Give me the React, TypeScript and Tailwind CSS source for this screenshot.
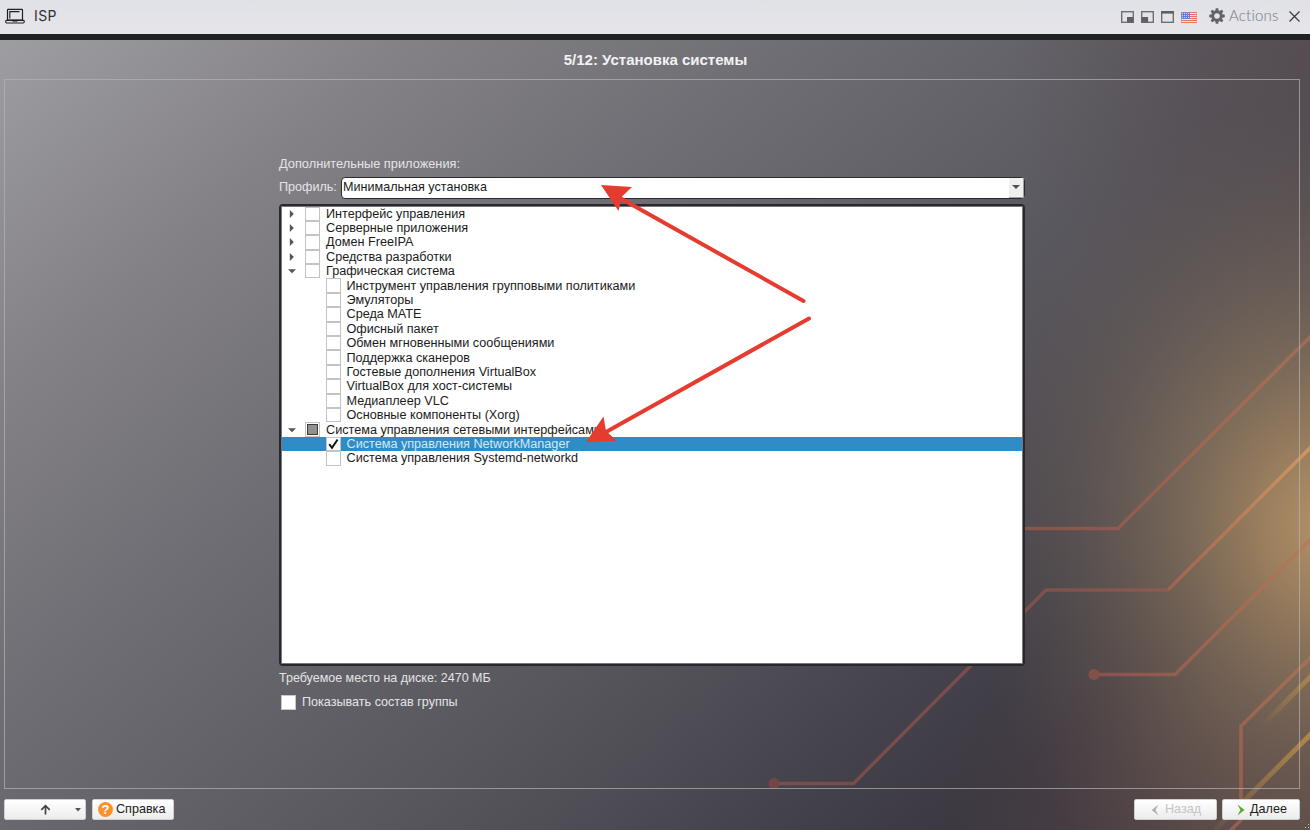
import React from "react";

type Row = {
  label: string;
  child?: boolean;
  open?: boolean;
  state?: "off" | "partial" | "on";
};

const rows: Row[] = [
  { label: "Интерфейс управления" },
  { label: "Серверные приложения" },
  { label: "Домен FreeIPA" },
  { label: "Средства разработки" },
  { label: "Графическая система", open: true },
  { label: "Инструмент управления групповыми политиками", child: true },
  { label: "Эмуляторы", child: true },
  { label: "Среда MATE", child: true },
  { label: "Офисный пакет", child: true },
  { label: "Обмен мгновенными сообщениями", child: true },
  { label: "Поддержка сканеров", child: true },
  { label: "Гостевые дополнения VirtualBox", child: true },
  { label: "VirtualBox для хост-системы", child: true },
  { label: "Медиаплеер VLC", child: true },
  { label: "Основные компоненты (Xorg)", child: true },
  { label: "Система управления сетевыми интерфейсами", open: true, state: "partial" },
  { label: "Система управления NetworkManager", child: true, state: "on" },
  { label: "Система управления Systemd-networkd", child: true },
];

function Laptop() {
  return (
    <svg width="20" height="16" viewBox="0 0 20 16" fill="none" stroke="#202020">
      <rect x="2.5" y="1.3" width="15" height="10.7" rx="0.6" strokeWidth="1.2" />
      <path d="M4.8 10.5V3.6H14.5" strokeWidth="1.1" />
      <rect x="0.7" y="12.4" width="18.5" height="2.6" rx="0.9" strokeWidth="1.1" fill="#e4e4e9" />
      <path d="M7.5 13H12.5" strokeWidth="1.2" />
    </svg>
  );
}

function WindowIcon({ kind }: { kind: "right" | "left" | "full" }) {
  return (
    <svg width="13" height="12" viewBox="0 0 13 12">
      <rect x="0.7" y="0.7" width="11.6" height="10.6" fill="none" stroke="#707074" strokeWidth="1.4" />
      {kind === "right" && <rect x="6" y="6" width="6.5" height="5.5" fill="#606064" />}
      {kind === "left" && <rect x="0.6" y="6" width="6.5" height="5.5" fill="#606064" />}
      {kind === "full" && <rect x="0" y="0" width="13" height="2.6" fill="#606064" />}
    </svg>
  );
}

function Flag() {
  return (
    <svg width="16" height="11" viewBox="0 0 16 11">
      <rect width="16" height="11" fill="#f7e5e3" />
      {[0, 2, 4, 6, 8, 10].map((y) => (
        <rect key={y} y={y} width="16" height="1" fill="#ee6a5f" />
      ))}
      <rect width="9" height="7" fill="#5b7fe0" />
      {[1, 3, 5].map((y) =>
        [1, 3, 5, 7].map((x) => <rect key={`${x}-${y}`} x={x} y={y} width="1" height="1" fill="#c9d6fa" />),
      )}
      <rect x="0.4" y="0.4" width="15.2" height="10.2" fill="none" stroke="#d98a63" strokeWidth="0.7" opacity="0.7" />
    </svg>
  );
}

function Gear() {
  return (
    <svg width="16" height="16" viewBox="-8 -8 16 16">
      {[0, 45, 90, 135, 180, 225, 270, 315].map((a) => (
        <path key={a} d="M-1.8 -5L-1.2 -7.8H1.2L1.8 -5Z" fill="#646468" transform={`rotate(${a})`} />
      ))}
      <circle r="4.3" fill="none" stroke="#646468" strokeWidth="3" />
    </svg>
  );
}

function Backdrop() {
  return (
    <svg className="absolute inset-0 h-full w-full" viewBox="0 40 1310 790" preserveAspectRatio="none">
      <defs>
        <linearGradient id="base" gradientUnits="userSpaceOnUse" x1="0" y1="40" x2="790" y2="970">
          <stop offset="0" stopColor="#9e9da1" />
          <stop offset="0.22" stopColor="#838186" />
          <stop offset="0.42" stopColor="#6f6e74" />
          <stop offset="0.7" stopColor="#58565d" />
          <stop offset="0.88" stopColor="#45434c" />
          <stop offset="1" stopColor="#3b3841" />
        </linearGradient>
        <radialGradient id="glow" gradientUnits="userSpaceOnUse" cx="0" cy="0" r="1" gradientTransform="translate(1330 525) scale(370 430)">
          <stop offset="0" stopColor="#bb9768" stopOpacity="0.96" />
          <stop offset="0.2" stopColor="#ae8d64" stopOpacity="0.8" />
          <stop offset="0.5" stopColor="#927b60" stopOpacity="0.5" />
          <stop offset="0.78" stopColor="#7a6858" stopOpacity="0.22" />
          <stop offset="1" stopColor="#6a5a55" stopOpacity="0" />
        </radialGradient>
        <radialGradient id="dusk" gradientUnits="userSpaceOnUse" cx="0" cy="0" r="1" gradientTransform="translate(1260 840) scale(330 260)">
          <stop offset="0" stopColor="#6c5047" stopOpacity="0.6" />
          <stop offset="1" stopColor="#64484a" stopOpacity="0" />
        </radialGradient>
        <radialGradient id="corner" gradientUnits="userSpaceOnUse" cx="0" cy="0" r="1" gradientTransform="translate(1310 60) scale(300 330)">
          <stop offset="0" stopColor="#54494d" stopOpacity="0.7" />
          <stop offset="1" stopColor="#54494d" stopOpacity="0" />
        </radialGradient>
        <linearGradient id="trace" gradientUnits="userSpaceOnUse" x1="1168" y1="590" x2="1310" y2="447">
          <stop offset="0" stopColor="#a1624f" />
          <stop offset="1" stopColor="#d39a63" />
        </linearGradient>
        <linearGradient id="warm" gradientUnits="userSpaceOnUse" x1="1100" y1="0" x2="1310" y2="0">
          <stop offset="0" stopColor="#a95a4d" />
          <stop offset="1" stopColor="#b97354" />
        </linearGradient>
        <linearGradient id="gold" gradientUnits="userSpaceOnUse" x1="1215" y1="830" x2="1310" y2="735">
          <stop offset="0" stopColor="#b98843" stopOpacity="0.1" />
          <stop offset="1" stopColor="#bb8d4c" />
        </linearGradient>
        <linearGradient id="goldTop" gradientUnits="userSpaceOnUse" x1="1262" y1="726" x2="1310" y2="677">
          <stop offset="0" stopColor="#b98843" stopOpacity="0" />
          <stop offset="1" stopColor="#b88d50" />
        </linearGradient>
      </defs>
      <rect y="40" width="1310" height="790" fill="url(#base)" />
      <rect y="40" width="1310" height="790" fill="url(#corner)" />
      <rect y="40" width="1310" height="790" fill="url(#dusk)" />
      <rect y="40" width="1310" height="790" fill="url(#glow)" />
      <g fill="none" stroke="#a95a4d" strokeOpacity="0.62" strokeWidth="3.6">
        <path d="M1000 528.5H1118L1312 335" stroke="url(#warm)" />
        <path d="M774 783.5H853.5L1046 590H1168" strokeOpacity="0.52" />
        <path d="M1168 590L1312 446" stroke="url(#trace)" strokeOpacity="0.9" />
        <path d="M1094 674.5H1175L1312 538" stroke="url(#warm)" />
        <path d="M1312 656L1241 726V820L1229 832" stroke="url(#warm)" />
        <path d="M1215 830L1312 733" stroke="url(#gold)" strokeOpacity="0.85" strokeWidth="5" />
        <path d="M1262 726L1312 675" stroke="url(#goldTop)" strokeOpacity="0.7" strokeWidth="5" />
      </g>
      <circle cx="774" cy="783.5" r="5.5" fill="#734549" />
      <circle cx="1094" cy="674.5" r="5.5" fill="#82504a" />
    </svg>
  );
}

function Check({ state = "off" }: { state?: "off" | "partial" | "on" }) {
  return (
    <span className="flex h-[14.4px] w-[15px] shrink-0 items-center justify-center border border-[#c3c3c3] bg-white">
      {state === "partial" && <span className="h-[11px] w-[11px] border border-[#3c3c3c] bg-[#909090]" />}
      {state === "on" && (
        <svg width="11" height="12" viewBox="0 0 11 12" fill="none" stroke="#151515" strokeWidth="2">
          <path d="M1.2 6.2L4 9.8L9.6 1.5" />
        </svg>
      )}
    </span>
  );
}

function TreeRow({ row }: { row: Row }) {
  const selected = row.state === "on";
  return (
    <div className={`flex h-[14.4px] items-center whitespace-nowrap ${selected ? "bg-[#308cc6] text-[#d3e8f6]" : "text-[#1b1b1b]"}`}>
      <span className={`flex shrink-0 items-center ${row.child ? "w-[43.5px]" : "w-[23px] pl-[5px]"}`}>
        {!row.child && (
          <svg width="10" height="10" viewBox="0 0 10 10" fill="#555">
            {row.open ? <path d="M1 3.2H9L5 7.2Z" /> : <path d="M2.8 1L6.8 5L2.8 9Z" />}
          </svg>
        )}
      </span>
      <Check state={row.state} />
      <span className="ml-[6px] text-[12.65px] leading-[14px]">{row.label}</span>
    </div>
  );
}

const button =
  "flex h-[21px] items-center rounded-[2px] border border-[#cfcfcf] bg-linear-to-b from-white to-[#ececec] text-[12.6px] leading-none";

export default function App() {
  return (
    <div className="flex h-[830px] w-[1310px] flex-col overflow-hidden font-['Liberation_Sans',sans-serif]">
      <header className="flex h-[34px] shrink-0 items-center bg-linear-to-b from-[#e0e1e6] to-[#e6e5ea] pl-[5px] pr-[10px]">
        <div className="-mt-[2px]">
          <Laptop />
        </div>
        <span className="-mt-[4px] ml-[9px] font-['Inter',sans-serif] text-[14px] tracking-[0.4px] text-[#303034]">ISP</span>
        <div className="ml-auto flex items-center">
          <div className="flex items-center gap-[7px]">
            <WindowIcon kind="right" />
            <WindowIcon kind="left" />
            <WindowIcon kind="full" />
            <Flag />
          </div>
          <div className="-mt-[2px] ml-[12px] flex items-center">
            <Gear />
            <span className="-mt-[2px] ml-[4px] w-[60px] font-['Lato',sans-serif] text-[15px] font-light leading-none tracking-[0.2px] text-[#77777c]">Actions</span>
            <svg width="11" height="11" viewBox="0 0 11 11" stroke="#3a3a3e" strokeWidth="1.2">
              <path d="M0.5 0.5L10.5 10.5M10.5 0.5L0.5 10.5" />
            </svg>
          </div>
        </div>
      </header>
      <div className="h-[6px] shrink-0 bg-[#212322]" />
      <main className="relative flex flex-1 flex-col">
        <Backdrop />
        <div className="relative flex flex-1 flex-col pl-1 pr-[10px]">
          <h1 className="flex h-[39px] shrink-0 items-center justify-center pl-[7px] pt-px text-[15px] font-bold text-[#f2f2f3]">
            5/12: Установка системы
          </h1>
          <section className="flex h-[710px] shrink-0 flex-col border border-[#b4b3b6]/70 pl-[274px] pt-[76px] text-[12.6px] leading-[15px] text-[#e4e4e6]">
            <div className="text-[12.8px]">Дополнительные приложения:</div>
            <div className="mt-[5px] flex h-[23px] w-[746px] items-center">
              <span className="w-[62px] shrink-0">Профиль:</span>
              <div className="flex h-[22px] flex-1 items-stretch rounded-[4px] border-[1.5px] border-[#2b2a2d] bg-white text-[#1b1b1b]">
                <span className="flex flex-1 items-center pl-px">Минимальная установка</span>
                <span className="flex w-[15px] items-center justify-center border-b border-r border-[#a0a0a0] bg-[#efefef]">
                  <svg width="8" height="4" viewBox="0 0 8 4" fill="#505050">
                    <path d="M0 0H8L4 4Z" />
                  </svg>
                </span>
              </div>
            </div>
            <div className="mt-[5px] h-[462px] w-[746px] rounded-[4px] border-2 border-[#29282c] bg-white">
              <div className="h-full border border-[#77767a]">
                <div className="-mt-[0.5px]">
                  {rows.map((row) => (
                    <TreeRow key={row.label} row={row} />
                  ))}
                </div>
              </div>
            </div>
            <div className="mt-[5px] text-[12.5px]">Требуемое место на диске: 2470 МБ</div>
            <div className="mt-[8px] flex items-center pl-[2px]">
              <span className="h-[15px] w-[15px] border border-[#c8c8c8] bg-white" />
              <span className="ml-[6px] pt-px">Показывать состав группы</span>
            </div>
          </section>
          <footer className="flex items-center pt-[10px]">
            <div className={`${button} w-[82px]`}>
              <svg className="ml-[35px]" width="11" height="11" viewBox="0 0 11 11" fill="none" stroke="#444" strokeWidth="1.7">
                <path d="M5.5 10.5V2M1.3 5.8L5.5 1.6L9.7 5.8" />
              </svg>
              <svg className="ml-[24px]" width="6" height="4" viewBox="0 0 6 4" fill="#555">
                <path d="M0 0H6L3 3.6Z" />
              </svg>
            </div>
            <div className={`${button} ml-[6px] w-[82px] pl-[5px] text-[#202020]`}>
              <span className="flex h-[15px] w-[15px] items-center justify-center rounded-full bg-[#f9922b] text-[13px] font-bold text-white">?</span>
              <span className="ml-[3px]">Справка</span>
            </div>
            <div className={`${button} ml-auto w-[83px] pl-[16px] text-[#c4c4c6]`}>
              <svg width="8" height="12" viewBox="0 0 8 12" fill="#b2b2b2">
                <path d="M7.5 0.5L0.5 6L7.5 11.5L4.6 6Z" />
              </svg>
              <span className="ml-[6px]">Назад</span>
            </div>
            <div className={`${button} ml-[5px] w-[78px] pl-[14px] text-[#202020]`}>
              <svg width="8" height="12" viewBox="0 0 8 12" fill="#57ad35">
                <path d="M0.5 0.5L7.5 6L0.5 11.5L3.4 6Z" />
              </svg>
              <span className="ml-[5px]">Далее</span>
            </div>
          </footer>
        </div>
        <svg className="pointer-events-none absolute left-[580px] top-[140px]" width="240" height="270" viewBox="580 180 240 270" fill="#e63c30">
          <path d="M803.500 301L620 198M809 318.500L606 432" stroke="#e63c30" strokeWidth="4" strokeLinecap="round" />
          <path d="M601 185L632 187L622 196.500L618.500 211Z" />
          <path d="M586 442L603.500 416.500L606 431L617 441Z" />
        </svg>
        <svg className="absolute bottom-0 right-0" width="6" height="6" viewBox="0 0 6 6" fill="#c8c0b8">
          <path d="M4 0h1v1h-1zM4 3h1v1h-1zM1 3h1v1h-1z" />
        </svg>
      </main>
    </div>
  );
}
